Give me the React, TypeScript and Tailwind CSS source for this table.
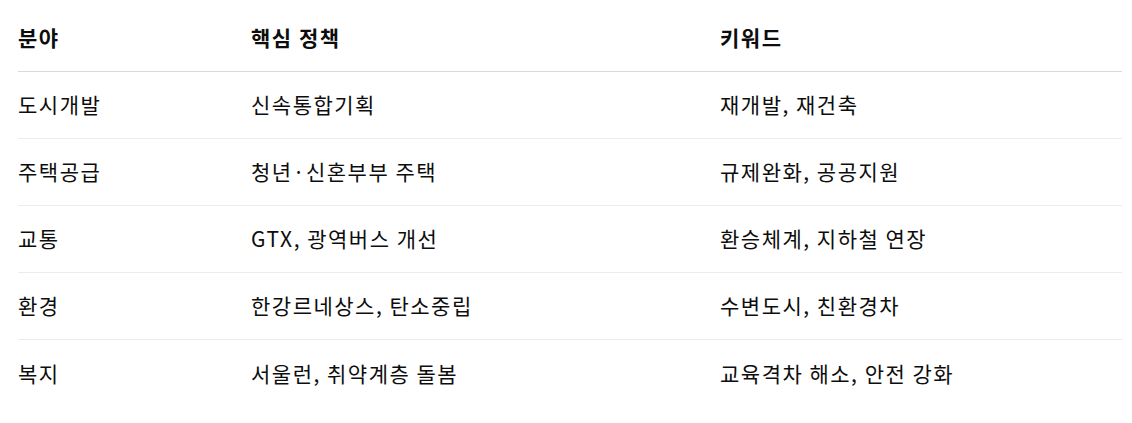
const rows = [
  ["도시개발", "신속통합기획", "재개발, 재건축"],
  ["주택공급", "청년·신혼부부 주택", "규제완화, 공공지원"],
  ["교통", "GTX, 광역버스 개선", "환승체계, 지하철 연장"],
  ["환경", "한강르네상스, 탄소중립", "수변도시, 친환경차"],
  ["복지", "서울런, 취약계층 돌봄", "교육격차 해소, 안전 강화"],
];

export default function App() {
  return (
    <div
      className="w-[1132px] h-[423px] bg-white text-[#0d0d0d] pt-[5px] pl-[18px] pr-[10px] text-[21px] tracking-[1.5px]"
      style={{ fontFamily: '"Noto Sans CJK KR", "Noto Sans", sans-serif' }}
    >
      {/* 헤더 */}
      <div className="grid grid-cols-[233px_469px_1fr] h-[67px] items-center border-b border-[#d9d9d9] font-bold">
        <div>분야</div>
        <div>핵심 정책</div>
        <div>키워드</div>
      </div>

      {rows.map((r, i) => (
        <div
          key={r[0]}
          className={`grid grid-cols-[233px_469px_1fr] h-[67px] items-center ${
            i < rows.length - 1 ? "border-b border-[#ececec]" : ""
          }`}
        >
          <div>{r[0]}</div>
          <div>{r[1]}</div>
          <div>{r[2]}</div>
        </div>
      ))}
    </div>
  );
}
